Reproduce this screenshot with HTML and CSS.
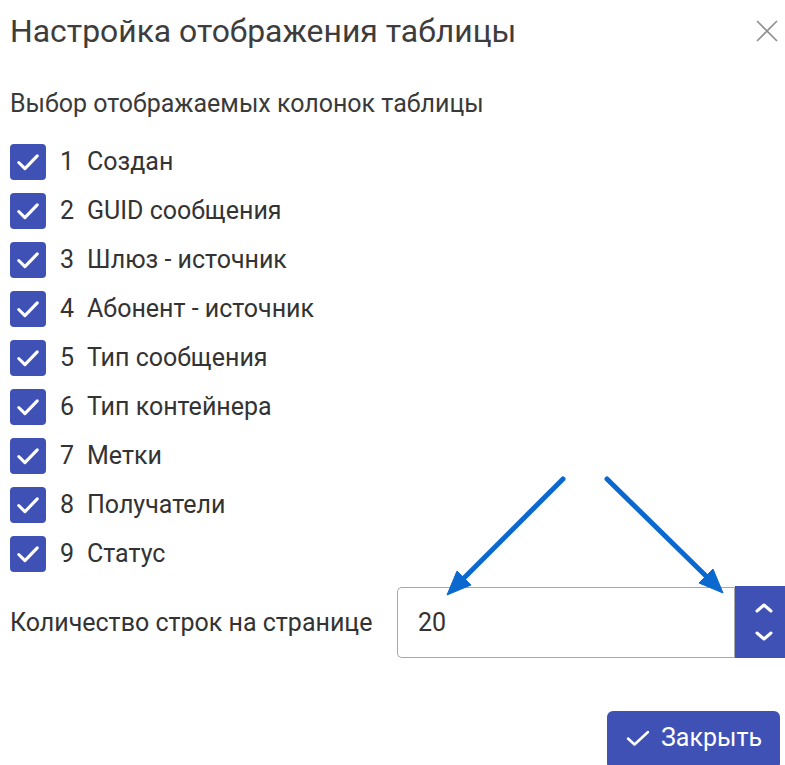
FILE: index.html
```html
<!DOCTYPE html>
<html lang="ru">
<head>
<meta charset="utf-8">
<title>Настройка отображения таблицы</title>
<link rel="stylesheet" href="styles.css">
</head>
<body>
<div class="dialog">
  <header class="dialog-head">
    <h1 class="dialog-title">Настройка отображения таблицы</h1>
    <button class="close-btn" aria-label="Закрыть">
      <svg width="24" height="24" viewBox="0 0 24 24"><path d="M2 2 L22 22 M22 2 L2 22" stroke="#8f8f8f" stroke-width="1.6" fill="none"/></svg>
    </button>
  </header>

  <p class="section-label">Выбор отображаемых колонок таблицы</p>

  <ul class="columns">
    <li class="col-row"><span class="check"><svg viewBox="0 0 35 35"><path d="M8.5 18 L14.5 24 L26.5 11.5" /></svg></span><span class="num">1</span><span class="name">Создан</span></li>
    <li class="col-row"><span class="check"><svg viewBox="0 0 35 35"><path d="M8.5 18 L14.5 24 L26.5 11.5" /></svg></span><span class="num">2</span><span class="name">GUID сообщения</span></li>
    <li class="col-row"><span class="check"><svg viewBox="0 0 35 35"><path d="M8.5 18 L14.5 24 L26.5 11.5" /></svg></span><span class="num">3</span><span class="name">Шлюз - источник</span></li>
    <li class="col-row"><span class="check"><svg viewBox="0 0 35 35"><path d="M8.5 18 L14.5 24 L26.5 11.5" /></svg></span><span class="num">4</span><span class="name">Абонент - источник</span></li>
    <li class="col-row"><span class="check"><svg viewBox="0 0 35 35"><path d="M8.5 18 L14.5 24 L26.5 11.5" /></svg></span><span class="num">5</span><span class="name">Тип сообщения</span></li>
    <li class="col-row"><span class="check"><svg viewBox="0 0 35 35"><path d="M8.5 18 L14.5 24 L26.5 11.5" /></svg></span><span class="num">6</span><span class="name">Тип контейнера</span></li>
    <li class="col-row"><span class="check"><svg viewBox="0 0 35 35"><path d="M8.5 18 L14.5 24 L26.5 11.5" /></svg></span><span class="num">7</span><span class="name">Метки</span></li>
    <li class="col-row"><span class="check"><svg viewBox="0 0 35 35"><path d="M8.5 18 L14.5 24 L26.5 11.5" /></svg></span><span class="num">8</span><span class="name">Получатели</span></li>
    <li class="col-row"><span class="check"><svg viewBox="0 0 35 35"><path d="M8.5 18 L14.5 24 L26.5 11.5" /></svg></span><span class="num">9</span><span class="name">Статус</span></li>
  </ul>

  <div class="rows-field">
    <label class="rows-label">Количество строк на странице</label>
    <div class="spin-input">
      <span class="spin-value">20</span>
      <div class="spin-buttons">
        <svg width="18" height="10" viewBox="0 0 18 10"><path d="M2 8 L9 2 L16 8" /></svg>
        <svg width="18" height="10" viewBox="0 0 18 10"><path d="M2 2 L9 8 L16 2" /></svg>
      </div>
    </div>
  </div>

  <footer class="dialog-foot">
    <button class="primary-btn">
      <svg width="26" height="20" viewBox="0 0 26 20"><path d="M3 10.5 L9.5 16.5 L23 4" /></svg>
      <span>Закрыть</span>
    </button>
  </footer>
</div>

<svg class="pointers" width="785" height="765" viewBox="0 0 785 765">
  <g fill="#0a68cf" stroke="#0a68cf">
    <line x1="563" y1="479" x2="464" y2="578" stroke-width="5" stroke-linecap="round"/>
    <polygon points="447,595 471,585 457,571" stroke-width="1" stroke-linejoin="round"/>
    <line x1="607" y1="479" x2="706" y2="576" stroke-width="5" stroke-linecap="round"/>
    <polygon points="723,593 699,583 713,569" stroke-width="1" stroke-linejoin="round"/>
  </g>
</svg>
</body>
</html>
```

FILE: styles.css
```css
html, body {
  margin: 0;
  padding: 0;
  overflow: hidden;
  background: #ffffff;
}

body {
  font-family: Roboto, "Noto Sans", "Liberation Sans", sans-serif;
  color: #333333;
  position: relative;
  width: 785px;
  height: 765px;
}

.dialog {
  padding: 0 0 0 10px;
}

.dialog-head {
  display: flex;
  align-items: center;
  justify-content: space-between;
  height: 62px;
}

.dialog-title {
  margin: 0;
  font-size: 31.9px;
  line-height: 40px;
  font-weight: 400;
  color: #3d3d3d;
}

.close-btn {
  border: 0;
  background: none;
  padding: 0;
  margin-right: 6px;
  width: 24px;
  height: 24px;
  display: flex;
}

.section-label {
  margin: 27px 0 0;
  font-size: 25px;
  line-height: 30px;
  color: #3a3a3a;
}

.columns {
  list-style: none;
  margin: 18px 0 0;
  padding: 0;
}

.col-row {
  display: flex;
  align-items: center;
  height: 49.1px;
  font-size: 25px;
  line-height: 30px;
}

.check {
  width: 36px;
  height: 36px;
  border-radius: 4px;
  background: #3f51b5;
  display: flex;
  flex: none;
}

.check svg {
  width: 36px;
  height: 36px;
  fill: none;
  stroke: #ffffff;
  stroke-width: 3;
  stroke-linecap: round;
  stroke-linejoin: round;
}

.num {
  margin-left: 14px;
  width: 27px;
}

.name {
  color: #333333;
}

.rows-field {
  display: flex;
  align-items: center;
  margin-top: 8px;
}

.rows-label {
  flex: none;
  font-size: 25px;
  color: #333333;
  width: 387px;
}

.spin-input {
  flex: none;
  display: flex;
  align-items: stretch;
  height: 71px;
  width: 396px;
  box-sizing: border-box;
  border: 1.5px solid #a8a8a8;
  border-right: 0;
  border-radius: 5px 0 0 5px;
}

.spin-value {
  flex: 1;
  display: flex;
  align-items: center;
  padding-left: 20px;
  font-size: 25px;
  color: #333333;
  border-right: 1.5px solid #a8a8a8;
}

.spin-buttons {
  width: 58px;
  margin: -1.5px 0;
  background: #3f51b5;
  display: flex;
  flex-direction: column;
  align-items: center;
  justify-content: center;
  gap: 18px;
}

.spin-buttons svg {
  fill: none;
  stroke: #ffffff;
  stroke-width: 3;
  stroke-linecap: round;
  stroke-linejoin: round;
}

.dialog-foot {
  display: flex;
  justify-content: flex-end;
  margin-top: 53px;
  padding-right: 5px;
}

.primary-btn {
  display: flex;
  align-items: center;
  gap: 10px;
  height: 58px;
  width: 173px;
  padding: 0 0 4px 18px;
  box-sizing: border-box;
  border: 0;
  border-radius: 6px;
  background: #3f51b5;
  color: #ffffff;
  font-family: Roboto, "Noto Sans", "Liberation Sans", sans-serif;
  font-size: 25px;
}

.primary-btn svg {
  fill: none;
  stroke: #ffffff;
  stroke-width: 2.5;
  stroke-linecap: round;
  stroke-linejoin: round;
}

.pointers {
  position: absolute;
  left: 0;
  top: 0;
  pointer-events: none;
}
```
